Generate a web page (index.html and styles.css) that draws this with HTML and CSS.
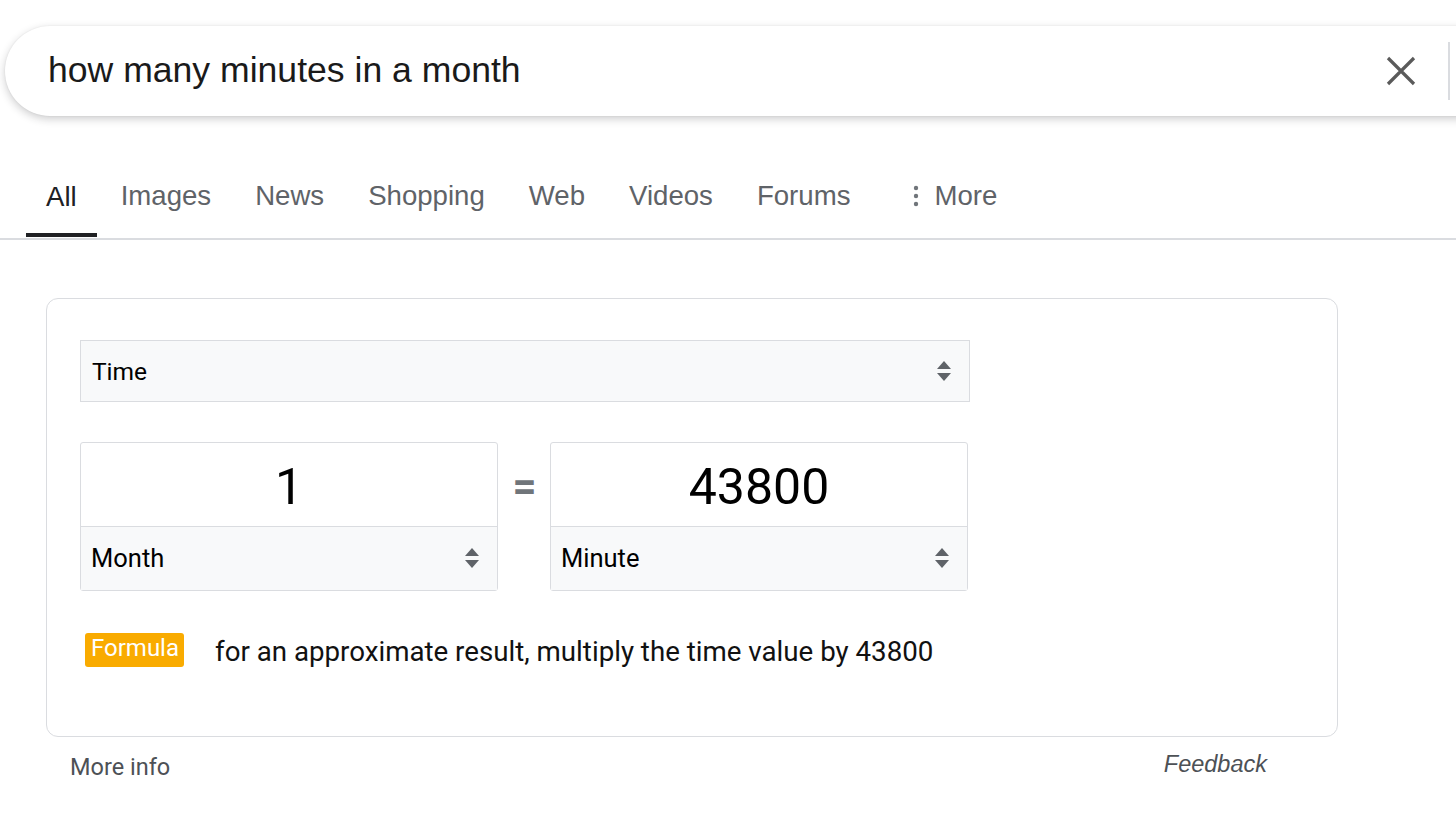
FILE: index.html
```html
<!DOCTYPE html>
<html lang="en">
<head>
<meta charset="utf-8">
<title>how many minutes in a month</title>
<link rel="stylesheet" href="styles.css">
</head>
<body>
<div class="page">
  <div class="searchbar">
    <div class="query">how many minutes in a month</div>
    <div class="search-actions">
      <svg class="clear" width="32" height="32" viewBox="0 0 32 32"><path d="M3 3 L29 29 M29 3 L3 29" stroke="#5a5a5a" stroke-width="3.2" fill="none"/></svg>
      <span class="divider"></span>
    </div>
  </div>

  <nav class="tabs">
    <a class="tab active">All</a>
    <a class="tab">Images</a>
    <a class="tab">News</a>
    <a class="tab">Shopping</a>
    <a class="tab">Web</a>
    <a class="tab">Videos</a>
    <a class="tab">Forums</a>
    <a class="tab more"><svg width="6" height="22" viewBox="0 0 6 22"><circle cx="3" cy="3" r="2.2" fill="#70757a"/><circle cx="3" cy="11" r="2.2" fill="#70757a"/><circle cx="3" cy="19" r="2.2" fill="#70757a"/></svg><span>More</span></a>
  </nav>

  <div class="result">
    <div class="card">
      <div class="select wide">
        <span>Time</span>
        <svg class="updown" width="16" height="22" viewBox="0 0 16 22"><path d="M8 1 L15 9 L1 9 Z M1 13 L15 13 L8 21 Z" fill="#5f6368"/></svg>
      </div>
      <div class="convert">
        <div class="unitbox">
          <div class="value">1</div>
          <div class="select unit">
            <span>Month</span>
            <svg class="updown" width="16" height="22" viewBox="0 0 16 22"><path d="M8 1 L15 9 L1 9 Z M1 13 L15 13 L8 21 Z" fill="#5f6368"/></svg>
          </div>
        </div>
        <div class="equals">=</div>
        <div class="unitbox">
          <div class="value">43800</div>
          <div class="select unit">
            <span>Minute</span>
            <svg class="updown" width="16" height="22" viewBox="0 0 16 22"><path d="M8 1 L15 9 L1 9 Z M1 13 L15 13 L8 21 Z" fill="#5f6368"/></svg>
          </div>
        </div>
      </div>
      <div class="formula">
        <span class="badge">Formula</span>
        <span class="formula-text">for an approximate result, multiply the time value by 43800</span>
      </div>
    </div>
    <div class="card-footer">
      <span class="moreinfo">More info</span>
      <span class="feedback">Feedback</span>
    </div>
  </div>
</div>
</body>
</html>
```

FILE: styles.css
```css
html, body {
  margin: 0;
  padding: 0;
  background: #fff;
  overflow: hidden;
}
body {
  font-family: Arial, "Liberation Sans", sans-serif;
  color: #202124;
}
.page {
  width: 1456px;
  height: 821px;
  overflow: hidden;
  padding-top: 26px;
  box-sizing: border-box;
}
.searchbar {
  margin-left: 5px;
  width: 1500px;
  height: 90px;
  border-radius: 45px;
  background: #fff;
  box-shadow: 0 3px 9px rgba(32, 33, 36, 0.22), 0 0 2px rgba(32, 33, 36, 0.08);
  display: flex;
  align-items: center;
  box-sizing: border-box;
  padding-left: 43px;
}
.query {
  font-family: "Liberation Sans", Arial, sans-serif;
  font-size: 35.6px;
  color: #1a1a1a;
  flex: 1;
  padding-bottom: 2px;
}
.search-actions {
  display: flex;
  align-items: center;
  width: 120px;
}
.clear {
  width: 32px;
  height: 32px;
}
.divider {
  display: block;
  width: 2px;
  height: 58px;
  background: #dadce0;
  margin-left: 31px;
}
.tabs {
  margin-top: 40px;
  height: 82px;
  border-bottom: 2px solid #dadce0;
  display: flex;
  padding-left: 26px;
  gap: 4px;
}
.tab {
  display: flex;
  align-items: center;
  padding: 4px 20px 0;
  font-family: "Liberation Sans", Arial, sans-serif;
  font-size: 27.6px;
  color: #5f6368;
  border-bottom: 4px solid transparent;
  margin-bottom: -2px;
  height: 80px;
  box-sizing: border-box;
}
.tab.active {
  color: #202124;
  border-bottom-color: #202124;
  height: 81px;
}
.tab.more {
  margin-left: 19px;
  gap: 15px;
}
.result {
  margin-left: 46px;
  margin-top: 58px;
  width: 1292px;
}
.card {
  border: 1.5px solid #dadce0;
  border-radius: 12px;
  height: 439px;
  box-sizing: border-box;
  padding: 41px 0 0 33px;
  font-family: Roboto, "Liberation Sans", sans-serif;
}
.select {
  background: #f8f9fa;
  border: 1.5px solid #dadce0;
  box-sizing: border-box;
  display: flex;
  align-items: center;
  justify-content: space-between;
  padding: 0 17px 0 11px;
  font-size: 24.5px;
  color: #202124;
}
.select span {
  color: #000;
}
.select.wide {
  width: 890px;
  height: 62px;
}
.updown {
  display: block;
}
.convert {
  display: flex;
  margin-top: 40px;
  align-items: flex-start;
}
.unitbox {
  width: 418px;
  height: 149px;
  border: 1.5px solid #dadce0;
  border-radius: 3px;
  box-sizing: border-box;
  display: flex;
  flex-direction: column;
}
.unitbox + .equals + .unitbox {
  margin-left: -1px;
}
.value {
  height: 84px;
  display: flex;
  align-items: center;
  justify-content: center;
  font-size: 50px;
  color: #000;
  border-bottom: 1.5px solid #dadce0;
  box-sizing: border-box;
  padding-top: 4px;
}
.select.unit {
  border: none;
  flex: 1;
  padding-bottom: 2px;
  padding-left: 10px;
  font-size: 25.5px;
}
.equals {
  width: 53px;
  text-align: center;
  font-size: 42px;
  color: #70757a;
  line-height: 1;
  padding-top: 24px;
  font-weight: bold;
}
.formula {
  display: flex;
  align-items: center;
  margin-top: 40px;
  margin-left: 5px;
}
.badge {
  background: #f9ab00;
  color: #fff;
  font-size: 24px;
  border-radius: 3px;
  padding: 2px 5px 5px 6px;
  line-height: 27px;
}
.formula-text {
  margin-left: 31px;
  font-size: 27.7px;
  color: #111;
  padding-top: 4px;
}
.card-footer {
  display: flex;
  justify-content: space-between;
  padding: 16px 71px 0 24px;
  font-size: 23.5px;
  color: #4d5156;
}
.moreinfo {
  font-family: Roboto, "Liberation Sans", sans-serif;
}
.feedback {
  font-family: "Liberation Sans", Arial, sans-serif;
  font-style: italic;
  margin-top: -2px;
}
```
